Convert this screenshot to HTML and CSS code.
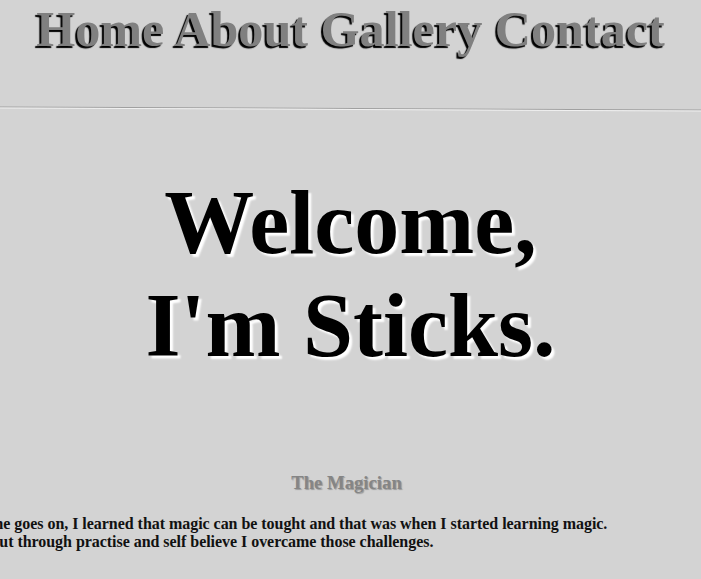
FILE: index.html
```html
<!DOCTYPE html>
<html lang="en">
<head>
<meta charset="utf-8">
<title>Sticks</title>
<link rel="stylesheet" href="styles.css">
</head>
<body>
<nav class="nav">Home About Gallery Contact</nav>
<hr class="rule">
<h1 class="hero">Welcome,<br>I'm Sticks.</h1>
<main class="main">
  <section class="story">
    <h3 class="story-title">The Magician</h3>
    <p class="story-text">But as time goes on, I learned that magic can be tought and that was when I started learning magic.<br>At first, but through practise and self believe I overcame those challenges.</p>
  </section>
</main>
</body>
</html>
```

FILE: styles.css
```css
html, body {
  margin: 0;
  padding: 0;
}
body {
  background: #d3d3d3;
  font-family: "Liberation Serif", "Times New Roman", serif;
  overflow: hidden;
}
.nav {
  text-align: center;
  font-size: 50.2px;
  font-weight: bold;
  color: #808080;
  text-shadow: -2px 2px 1px #000;
}
.rule {
  margin: 50px 0 0;
  border: 0;
  border-top: 1px solid #a0a0a0;
  border-bottom: 1px solid #f0f0f0;
  transform: rotate(0.25deg);
}
.hero {
  margin: 61px 0 0;
  text-align: center;
  font-size: 90px;
  font-weight: bold;
  color: #000;
  text-shadow: 3px 3px 2px #fff;
}
.main {
  display: flex;
  flex-direction: column;
  align-items: center;
  margin-top: 95px;
}
.story {
  width: 834px;
  flex-shrink: 0;
}
.story-title {
  margin: 0 0 20.5px;
  padding-right: 8px;
  text-align: center;
  font-size: 18.72px;
  font-weight: bold;
  color: #858585;
  text-shadow: 1px 1px 1px #9a9a9a;
}
.story-text {
  margin: 0;
  font-size: 16px;
  font-weight: bold;
  color: #111;
  letter-spacing: -0.04px;
  white-space: nowrap;
}
```
